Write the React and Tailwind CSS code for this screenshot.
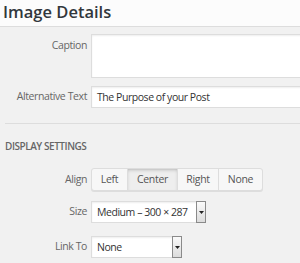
import React from 'react';

const font = { fontFamily: '"Open Sans", sans-serif' };

// small select with the old-style arrow box
const Select = ({ value, width }) => (
    <div className={`flex h-[22px] ${width} border border-[#ddd] bg-white shadow-[inset_0_1px_2px_rgba(0,0,0,0.07)]`}>
        <div className="flex-1 pl-[5px] text-[10.5px] tracking-[-0.45px] leading-[20px] text-[#333] whitespace-nowrap overflow-hidden">{value}</div>
        <div className="flex w-[10px] items-center justify-center border border-[#8a8a8a] bg-gradient-to-b from-[#fafafa] to-[#dcdcdc] -my-px -mr-px">
            <svg width="5" height="3" viewBox="0 0 5 3"><path d="M0 0h5L2.5 3z" fill="#222" /></svg>
        </div>
    </div>
);

const Row = ({ label, children, className = '' }) => (
    <div className={`flex items-center ${className}`}>
        <div className="w-[87px] text-right text-[10.5px] tracking-[-0.4px] text-[#666]">{label}</div>
        <div className="ml-[4px] flex-1">{children}</div>
    </div>
);

const App = () => {
    const aligns = ['Left', 'Center', 'Right', 'None'];
    const widths = ['w-[35px]', 'w-[50px]', 'w-[41px]', 'w-[44px]'];

    return (
        <div className="w-[300px] h-[263px] overflow-hidden bg-[#f1f1f1]" style={font}>
            {/* header */}
            <div className="h-[27px] border-b border-[#dddddd] bg-[#fcfcfc] pl-[3px] pt-[1px]">
                <h1 className="text-[16.5px] font-semibold leading-[22px] text-[#32373c]">Image Details</h1>
            </div>

            <div className="pt-[7px]">
                <div className="flex items-start">
                    <div className="w-[87px] pt-[4px] text-right text-[10.5px] tracking-[-0.4px] text-[#666]">Caption</div>
                    <div className="ml-[4px] h-[44px] flex-1 -mr-[4px] border border-[#ddd] bg-white shadow-[inset_0_1px_2px_rgba(0,0,0,0.07)]" />
                </div>

                <Row label="Alternative Text" className="mt-[8px]">
                    <div className="h-[22px] -mr-[4px] border border-[#ddd] bg-white pl-[5px] text-[10.5px] tracking-[-0.45px] leading-[20px] text-[#333] shadow-[inset_0_1px_2px_rgba(0,0,0,0.07)]">
                        The Purpose of your Post
                    </div>
                </Row>

                <div className="ml-[5px] mt-[15px] border-t border-[#dddddd]" />

                <div className="ml-[5px] mt-[15px] text-[10px] font-semibold uppercase tracking-[-0.45px] leading-[14px] text-[#666]">Display Settings</div>

                <Row label="Align" className="mt-[15px]">
                    <div className="flex h-[23px] w-fit rounded-[3px] border border-[#ddd] bg-[#f7f7f7] shadow-[0_1px_0_#ddd]">
                        {aligns.map((a, i) => (
                            <div
                                key={a}
                                className={`flex items-center justify-center text-[10.5px] tracking-[-0.3px] text-[#555] ${widths[i]} ${i > 0 ? 'border-l border-[#ddd]' : ''} ${a === 'Center' ? 'bg-[#eeeeee] shadow-[inset_0_2px_5px_-3px_rgba(0,0,0,0.5)]' : ''}`}
                            >
                                {a}
                            </div>
                        ))}
                    </div>
                </Row>

                <Row label="Size" className="mt-[10px]">
                    <Select value="Medium – 300 × 287" width="w-[115px]" />
                </Row>

                <Row label="Link To" className="mt-[13px]">
                    <Select value="None" width="w-[91px]" />
                </Row>
            </div>
        </div>
    );
};

export default App;
